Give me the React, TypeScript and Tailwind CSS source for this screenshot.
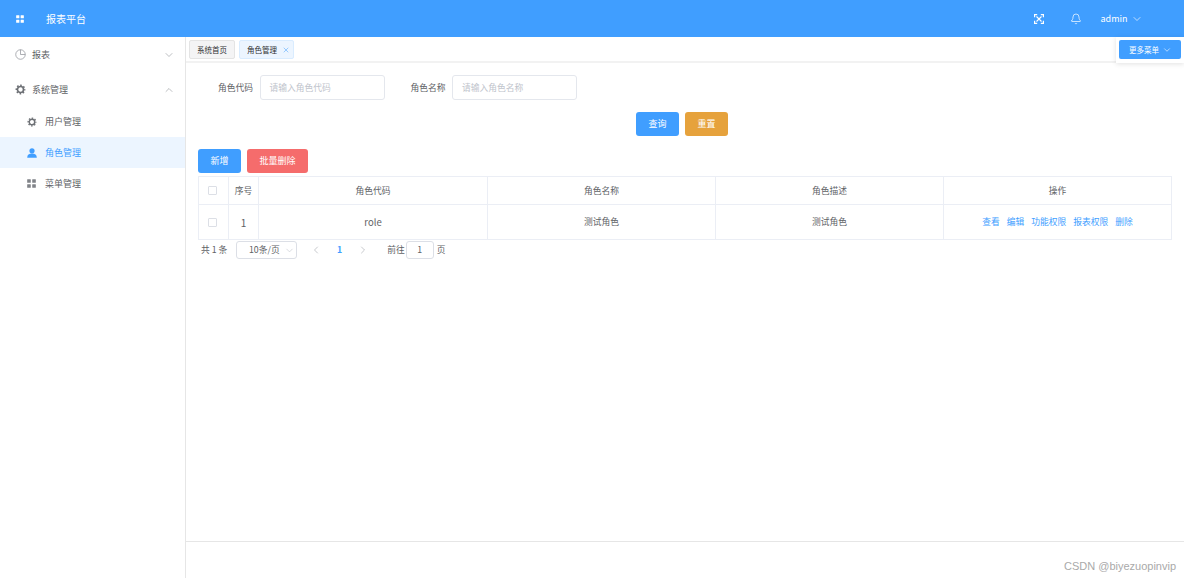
import { Bell, ChevronDown, ChevronLeft, ChevronRight, ChevronUp, X } from "lucide-react";

const font = { fontFamily: '"Noto Sans CJK SC", "Noto Sans", sans-serif' };

const GridIcon = ({ className }: { className?: string }) => (
  <svg viewBox="0 0 10 10" className={className} fill="currentColor">
    <rect x="0.2" y="0.2" width="4" height="4" rx="0.4" />
    <rect x="5.8" y="0.2" width="4" height="4" rx="0.4" />
    <rect x="0.2" y="5.8" width="4" height="4" rx="0.4" />
    <rect x="5.8" y="5.8" width="4" height="4" rx="0.4" />
  </svg>
);

const PieIcon = () => (
  <svg viewBox="0 0 12 12" className="h-[11px] w-[11px] text-[#909399]" fill="none" stroke="currentColor" strokeWidth="0.8">
    <circle cx="6" cy="6" r="5.2" />
    <path d="M6 .8V6h5.2" />
  </svg>
);

const GearIcon = ({ className }: { className?: string }) => (
  <svg viewBox="0 0 12 12" className={className} fill="none" stroke="currentColor">
    <circle cx="6" cy="6" r="3.3" strokeWidth="1.8" />
    <circle cx="6" cy="6" r="4.6" strokeWidth="1.6" strokeDasharray="1.8 1.81" strokeDashoffset="0.9" />
  </svg>
);

const UserIcon = () => (
  <svg viewBox="0 0 10 10" className="h-[10px] w-[10px] text-[#409eff]" fill="currentColor">
    <circle cx="5" cy="2.8" r="2.6" />
    <path d="M0.2 9.8C0.2 7 2 5.6 5 5.6S9.8 7 9.8 9.8Z" />
  </svg>
);

const FullIcon = () => (
  <svg viewBox="0 0 10 10" className="h-[10px] w-[10px] text-white" fill="none" stroke="currentColor">
    <path d="M2.5 2.5 7.5 7.5M7.5 2.5 2.5 7.5" strokeWidth="1.1" />
    <path d="M.6 3.2V.6H3.2M6.8 .6H9.4V3.2M9.4 6.8V9.4H6.8M3.2 9.4H.6V6.8" strokeWidth="1.2" />
  </svg>
);

const Checkbox = () => <span className="ml-[9px] block h-[9px] w-[9px] rounded-[1px] border border-[#dcdfe6] bg-white" />;

const Field = ({ label, placeholder }: { label: string; placeholder: string }) => (
  <div className="flex items-center">
    <span className="w-[35px] whitespace-nowrap text-[8.75px] text-[#606266]">{label}</span>
    <div className="ml-[6.5px] flex h-[25px] w-[125px] items-center rounded-[3px] border border-[#e4e7ed] pl-[9px] text-[8.75px] text-[#c0c4cc]">
      {placeholder}
    </div>
  </div>
);

const actions = ["查看", "编辑", "功能权限", "报表权限", "删除"];
const headers = ["角色代码", "角色名称", "角色描述", "操作"];

export default function App() {
  return (
    <div style={font} className="flex h-[578px] w-[1184px] flex-col overflow-hidden bg-white">
      <header className="flex h-[37px] shrink-0 items-center bg-[#409eff] text-white">
        <GridIcon className="ml-[16px] h-[8px] w-[8px]" />
        <span className="ml-[22px] text-[10px]">报表平台</span>
        <div className="ml-auto flex items-center">
          <FullIcon />
          <Bell className="ml-[26px] h-[12px] w-[12px]" strokeWidth={1.4} />
          <span className="ml-[19px] text-[9px]">admin</span>
          <ChevronDown className="ml-[3px] mr-[41.5px] h-[12px] w-[12px]" strokeWidth={1.3} />
        </div>
      </header>

      <div className="flex min-h-0 flex-1">
        <aside className="w-[186px] shrink-0 border-r border-[#e6e6e6] text-[9px] text-[#606266]">
          <div className="flex h-[35px] items-center pl-[15px] pr-[10px]">
            <PieIcon />
            <span className="ml-[6px]">报表</span>
            <ChevronDown className="ml-auto h-[12px] w-[12px] text-[#909399]" strokeWidth={1.2} />
          </div>
          <div className="flex h-[35px] items-center pl-[15px] pr-[10px]">
            <GearIcon className="h-[11px] w-[11px] text-[#6d7075]" />
            <span className="ml-[6px]">系统管理</span>
            <ChevronUp className="ml-auto h-[12px] w-[12px] text-[#909399]" strokeWidth={1.2} />
          </div>
          <div className="flex h-[30px] items-center pl-[27px]">
            <GearIcon className="h-[10px] w-[10px] text-[#6d7075]" />
            <span className="ml-[8px]">用户管理</span>
          </div>
          <div className="flex h-[31px] items-center bg-[#ecf5ff] pl-[27px] text-[#409eff]">
            <UserIcon />
            <span className="ml-[8px]">角色管理</span>
          </div>
          <div className="flex h-[31px] items-center pl-[27px]">
            <GridIcon className="h-[9px] w-[9px] text-[#808388]" />
            <span className="ml-[9px]">菜单管理</span>
          </div>
        </aside>

        <main className="flex min-w-0 flex-1 flex-col">
          <div className="flex h-[26px] shrink-0 border-b-2 border-[#f2f2f2]">
            <div className="flex items-start gap-[4px] pl-[3px] pt-[3px] text-[7.5px]">
              <span className="flex h-[19px] w-[46px] items-center justify-center rounded-[2px] border border-[#e4e4e4] bg-[#f4f4f5] text-[#303133]">系统首页</span>
              <span className="flex h-[19px] w-[55px] items-center rounded-[2px] border border-[#d9ecff] bg-[#ecf5ff] pl-[7px] text-[#303133]">
                角色管理
                <X className="ml-[5px] h-[8px] w-[8px] text-[#409eff]" strokeWidth={1.5} />
              </span>
            </div>
            <div className="ml-auto h-[26px] w-[68px] bg-white pl-[3px] pt-[3px] shadow-[0_1px_5px_rgba(0,0,0,0.12)]">
              <span className="flex h-[19px] w-[62px] items-center rounded-[2px] bg-[#409eff] pl-[10px] text-[7.5px] text-white">
                更多菜单
                <ChevronDown className="ml-[3px] h-[10px] w-[10px]" strokeWidth={1.4} />
              </span>
            </div>
          </div>

          <div className="min-h-0 flex-1 px-[12px]">
            <div className="ml-[20px] mt-[12px] flex gap-[26px]">
              <Field label="角色代码" placeholder="请输入角色代码" />
              <Field label="角色名称" placeholder="请输入角色名称" />
            </div>

            <div className="mt-[12px] flex justify-center gap-[6px] pr-[6px] text-[9px] text-white">
              <button className="h-[24px] w-[43px] rounded-[3px] bg-[#409eff]">查询</button>
              <button className="h-[24px] w-[43px] rounded-[3px] bg-[#e6a23c]">重置</button>
            </div>

            <div className="mt-[13px] flex gap-[6px] text-[9px] text-white">
              <button className="h-[24px] w-[43px] rounded-[3px] bg-[#409eff]">新增</button>
              <button className="h-[24px] w-[61px] rounded-[3px] bg-[#f56c6c]">批量删除</button>
            </div>

            <table className="mt-[3px] w-[974px] table-fixed border-collapse text-center text-[8.75px] text-[#606266]">
              <colgroup>
                <col className="w-[30px]" />
                <col className="w-[30px]" />
                <col className="w-[229px]" />
                <col className="w-[228px]" />
                <col className="w-[228px]" />
                <col className="w-[228px]" />
              </colgroup>
              <thead>
                <tr className="h-[28px]">
                  <th className="border border-[#ebeef5] font-normal"><Checkbox /></th>
                  <th className="border border-[#ebeef5] font-normal">序号</th>
                  {headers.map((h) => (
                    <th key={h} className="border border-[#ebeef5] font-normal">{h}</th>
                  ))}
                </tr>
              </thead>
              <tbody>
                <tr className="h-[35px]">
                  <td className="border border-[#ebeef5]"><Checkbox /></td>
                  <td className="border border-[#ebeef5] text-[10px]">1</td>
                  <td className="border border-[#ebeef5] text-[9.5px]">role</td>
                  <td className="border border-[#ebeef5]">测试角色</td>
                  <td className="border border-[#ebeef5]">测试角色</td>
                  <td className="border border-[#ebeef5]">
                    <div className="flex justify-center gap-[7px] text-[#409eff]">
                      {actions.map((a) => (
                        <span key={a}>{a}</span>
                      ))}
                    </div>
                  </td>
                </tr>
              </tbody>
            </table>

            <div className="mt-[1px] flex h-[18px] items-center pl-[3px] text-[8.75px] text-[#606266]">
              <span className="w-[35px] whitespace-nowrap">共 1 条</span>
              <span className="flex h-[18px] w-[61px] items-center rounded-[3px] border border-[#dcdfe6] pl-[12px]">
                10条/页
                <ChevronDown className="ml-auto mr-[1px] h-[11px] w-[11px] text-[#c0c4cc]" strokeWidth={1.3} />
              </span>
              <ChevronLeft className="ml-[13px] h-[12px] w-[12px] text-[#a8abb2]" strokeWidth={1.3} />
              <span className="ml-[15px] font-bold text-[#409eff]">1</span>
              <ChevronRight className="ml-[15px] h-[12px] w-[12px] text-[#a8abb2]" strokeWidth={1.3} />
              <span className="ml-[18px]">前往</span>
              <span className="ml-[1px] flex h-[18px] w-[28px] items-center justify-center rounded-[3px] border border-[#dcdfe6]">1</span>
              <span className="ml-[3px]">页</span>
            </div>
          </div>

          <div className="h-[37px] shrink-0 border-t border-[#e6e6e6]" />
        </main>
      </div>

      <span
        style={{ fontFamily: '"Liberation Sans", sans-serif' }}
        className="absolute left-[1064px] top-[559px] whitespace-nowrap text-[11px] leading-[14px] text-[#a9a9a9]"
      >
        CSDN @biyezuopinvip
      </span>
    </div>
  );
}
